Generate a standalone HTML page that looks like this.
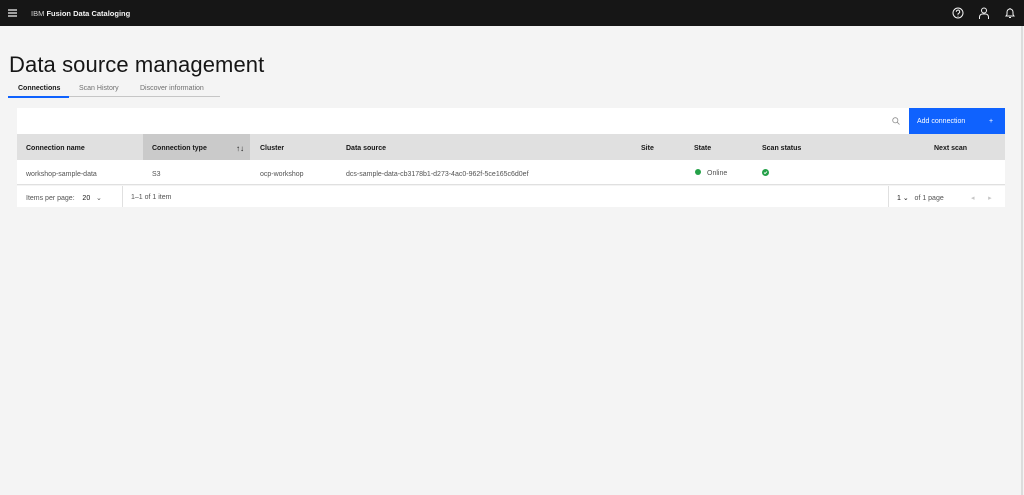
<!DOCTYPE html>
<html><head><style>
*{margin:0;padding:0;box-sizing:border-box}
body{width:1024px;height:495px;background:#f4f4f4;font-family:"Liberation Sans",sans-serif;position:relative;overflow:hidden;color:#161616}
.hdr{position:absolute;left:0;top:0;width:1024px;height:26px;background:#161616;color:#f4f4f4;font-size:7.5px}
.a{position:absolute;white-space:nowrap}
.title{left:9px;top:52px;font-size:22px;font-weight:300;color:#161616;letter-spacing:.1px}
.tab{top:85px;font-size:7px;color:#6f6f6f}
.cell{position:absolute;font-size:7px;white-space:nowrap;margin-top:2px}
</style></head><body>
<div class="hdr">
 <svg class="a" style="left:8px;top:9px" width="10" height="8"><path d="M0 1h9M0 4h9M0 7h9" stroke="#f4f4f4" stroke-width="1.2"/></svg>
 <div class="a" style="left:31px;top:9px"><span style="font-weight:normal;opacity:.85">IBM</span> <b>Fusion Data Cataloging</b></div>
 <svg class="a" style="left:952px;top:7px" width="12" height="12"><circle cx="6" cy="6" r="5" fill="none" stroke="#f4f4f4"/><path d="M4.3 4.8a1.7 1.7 0 1 1 2.4 1.5L6 7v.7M6 8.8v.8" fill="none" stroke="#f4f4f4"/></svg>
 <svg class="a" style="left:978px;top:7px" width="12" height="12"><circle cx="6" cy="3.5" r="2.5" fill="none" stroke="#f4f4f4"/><path d="M1.5 12v-2a3 3 0 0 1 3-3h3a3 3 0 0 1 3 3v2" fill="none" stroke="#f4f4f4"/></svg>
 <svg class="a" style="left:1004px;top:7px" width="12" height="12"><path d="M2 9h8L9 7.5V5a3 3 0 0 0-6 0v2.5zM5 10.5h2M6 1v1" fill="none" stroke="#f4f4f4"/></svg>
</div>
<div class="a title">Data source management</div>
<div class="a tab" style="left:18px;color:#161616;font-weight:bold">Connections</div>
<div class="a tab" style="left:79px">Scan History</div>
<div class="a tab" style="left:140px">Discover information</div>
<div class="a" style="left:8px;top:96px;width:212px;height:1px;background:#c6c6c6"></div>
<div class="a" style="left:8px;top:96px;width:61px;height:2px;background:#0f62fe"></div>

<div class="a" style="left:17px;top:108px;width:988px;height:26px;background:#fff"></div>
<svg class="a" style="left:892px;top:117px" width="8" height="8"><circle cx="3.3" cy="3.3" r="2.6" fill="none" stroke="#8d8d8d" stroke-width=".8"/><path d="M5.2 5.2L7.5 7.5" stroke="#8d8d8d" stroke-width=".8"/></svg>
<div class="a" style="left:909px;top:108px;width:96px;height:26px;background:#0f62fe;color:#fff;font-size:7px;padding:10px 0 0 8px">Add connection<span style="position:absolute;left:80px">+</span></div>

<div class="a" style="left:17px;top:134px;width:988px;height:26px;background:#e0e0e0"></div>
<div class="a" style="left:143px;top:134px;width:107px;height:26px;background:#cacaca"></div>
<div class="cell" style="left:26px;top:143px;font-weight:bold">Connection name</div>
<div class="cell" style="left:152px;top:143px;font-weight:bold">Connection type</div>
<div class="cell" style="left:236px;top:142px;font-size:8px">↑↓</div>
<div class="cell" style="left:260px;top:143px;font-weight:bold">Cluster</div>
<div class="cell" style="left:346px;top:143px;font-weight:bold">Data source</div>
<div class="cell" style="left:641px;top:143px;font-weight:bold">Site</div>
<div class="cell" style="left:694px;top:143px;font-weight:bold">State</div>
<div class="cell" style="left:762px;top:143px;font-weight:bold">Scan status</div>
<div class="cell" style="left:934px;top:143px;font-weight:bold">Next scan</div>

<div class="a" style="left:17px;top:160px;width:988px;height:25px;background:#fff;border-bottom:1px solid #e0e0e0"></div>
<div class="cell" style="left:26px;top:169px;color:#525252">workshop-sample-data</div>
<div class="cell" style="left:152px;top:169px;color:#525252">S3</div>
<div class="cell" style="left:260px;top:169px;color:#525252">ocp-workshop</div>
<div class="cell" style="left:346px;top:169px;color:#525252">dcs-sample-data-cb3178b1-d273-4ac0-962f-5ce165c6d0ef</div>
<div class="a" style="left:695px;top:169px;width:6px;height:6px;border-radius:50%;background:#24a148"></div>
<div class="cell" style="left:707px;top:168px;color:#525252">Online</div>
<svg class="a" style="left:762px;top:169px" width="7" height="7"><circle cx="3.5" cy="3.5" r="3.5" fill="#24a148"/><path d="M2 3.6l1 1 2-2" stroke="#fff" stroke-width=".9" fill="none"/></svg>

<div class="a" style="left:17px;top:186px;width:988px;height:21px;background:#fff"></div>
<div class="cell" style="left:26px;top:192px;color:#525252">Items per page:&nbsp;&nbsp;&nbsp;&nbsp;<span style="color:#161616">20</span>&nbsp;&nbsp;&nbsp;⌄</div>
<div class="a" style="left:122px;top:186px;width:1px;height:21px;background:#e0e0e0"></div>
<div class="cell" style="left:131px;top:192px;color:#525252">1–1 of 1 item</div>
<div class="a" style="left:888px;top:186px;width:1px;height:21px;background:#e0e0e0"></div>
<div class="cell" style="left:897px;top:192px">1 ⌄&nbsp;&nbsp;&nbsp;<span style="color:#525252">of 1 page</span></div>
<div class="cell" style="left:971px;top:192px;color:#c6c6c6">◂&nbsp;&nbsp;&nbsp;&nbsp;&nbsp;&nbsp;&nbsp;▸</div>
<div class="a" style="left:1021px;top:26px;width:2px;height:469px;background:#dcdcdc"></div>
</body></html>
